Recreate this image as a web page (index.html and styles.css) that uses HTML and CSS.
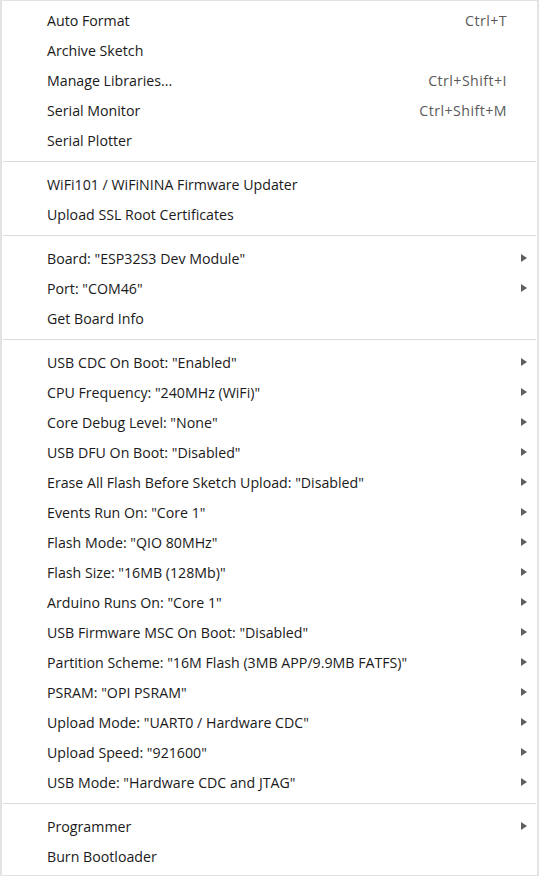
FILE: index.html
```html
<!DOCTYPE html>
<html>
<head>
<meta charset="utf-8">
<link rel="stylesheet" href="styles.css">
</head>
<body>
<div class="menu">
  <div class="group">
    <div class="item"><span class="label">Auto Format</span><span class="accel">Ctrl+T</span></div>
    <div class="item"><span class="label">Archive Sketch</span></div>
    <div class="item"><span class="label">Manage Libraries...</span><span class="accel">Ctrl+Shift+I</span></div>
    <div class="item"><span class="label">Serial Monitor</span><span class="accel">Ctrl+Shift+M</span></div>
    <div class="item"><span class="label">Serial Plotter</span></div>
  </div>
  <div class="sep"></div>
  <div class="group">
    <div class="item"><span class="label">WiFi101 / WiFiNINA Firmware Updater</span></div>
    <div class="item"><span class="label">Upload SSL Root Certificates</span></div>
  </div>
  <div class="sep"></div>
  <div class="group">
    <div class="item sub"><span class="label">Board: "ESP32S3 Dev Module"</span><span class="arrow"></span></div>
    <div class="item sub"><span class="label">Port: "COM46"</span><span class="arrow"></span></div>
    <div class="item"><span class="label">Get Board Info</span></div>
  </div>
  <div class="sep"></div>
  <div class="group">
    <div class="item sub"><span class="label">USB CDC On Boot: "Enabled"</span><span class="arrow"></span></div>
    <div class="item sub"><span class="label">CPU Frequency: "240MHz (WiFi)"</span><span class="arrow"></span></div>
    <div class="item sub"><span class="label">Core Debug Level: "None"</span><span class="arrow"></span></div>
    <div class="item sub"><span class="label">USB DFU On Boot: "Disabled"</span><span class="arrow"></span></div>
    <div class="item sub"><span class="label">Erase All Flash Before Sketch Upload: "Disabled"</span><span class="arrow"></span></div>
    <div class="item sub"><span class="label">Events Run On: "Core 1"</span><span class="arrow"></span></div>
    <div class="item sub"><span class="label">Flash Mode: "QIO 80MHz"</span><span class="arrow"></span></div>
    <div class="item sub"><span class="label">Flash Size: "16MB (128Mb)"</span><span class="arrow"></span></div>
    <div class="item sub"><span class="label">Arduino Runs On: "Core 1"</span><span class="arrow"></span></div>
    <div class="item sub"><span class="label">USB Firmware MSC On Boot: "Disabled"</span><span class="arrow"></span></div>
    <div class="item sub"><span class="label">Partition Scheme: "16M Flash (3MB APP/9.9MB FATFS)"</span><span class="arrow"></span></div>
    <div class="item sub"><span class="label">PSRAM: "OPI PSRAM"</span><span class="arrow"></span></div>
    <div class="item sub"><span class="label">Upload Mode: "UART0 / Hardware CDC"</span><span class="arrow"></span></div>
    <div class="item sub"><span class="label">Upload Speed: "921600"</span><span class="arrow"></span></div>
    <div class="item sub"><span class="label">USB Mode: "Hardware CDC and JTAG"</span><span class="arrow"></span></div>
  </div>
  <div class="sep"></div>
  <div class="group">
    <div class="item sub"><span class="label">Programmer</span><span class="arrow"></span></div>
    <div class="item"><span class="label">Burn Bootloader</span></div>
  </div>
</div>
</body>
</html>
```

FILE: styles.css
```css
html, body {
  margin: 0;
  padding: 0;
  background: #ffffff;
}

.menu {
  box-sizing: border-box;
  width: 539px;
  height: 876px;
  border: 1px solid #e3e3e3;
  border-left-width: 2px;
  border-right-width: 2px;
  padding: 4px 0;
  background: #ffffff;
  font-family: "Open Sans", "Noto Sans", sans-serif;
  font-size: 14.2px;
  color: #1a1a1a;
}

.item {
  height: 30px;
  display: flex;
  align-items: center;
  padding-left: 45px;
  padding-right: 30px;
}

.label {
  flex: 1;
  white-space: nowrap;
}

.accel {
  color: #5a5a5a;
  white-space: nowrap;
  letter-spacing: 0.45px;
}

.sub {
  padding-right: 10px;
}

.arrow {
  width: 0;
  height: 0;
  border-top: 4.5px solid transparent;
  border-bottom: 4.5px solid transparent;
  border-left: 6px solid #5f5f5f;
}

.sep {
  height: 14px;
  display: flex;
  align-items: flex-start;
  padding-top: 6px;
  box-sizing: border-box;
  margin: 0 1px;
}

.sep::before {
  content: "";
  display: block;
  width: 100%;
  height: 1px;
  background: #dcdcdc;
}
```
